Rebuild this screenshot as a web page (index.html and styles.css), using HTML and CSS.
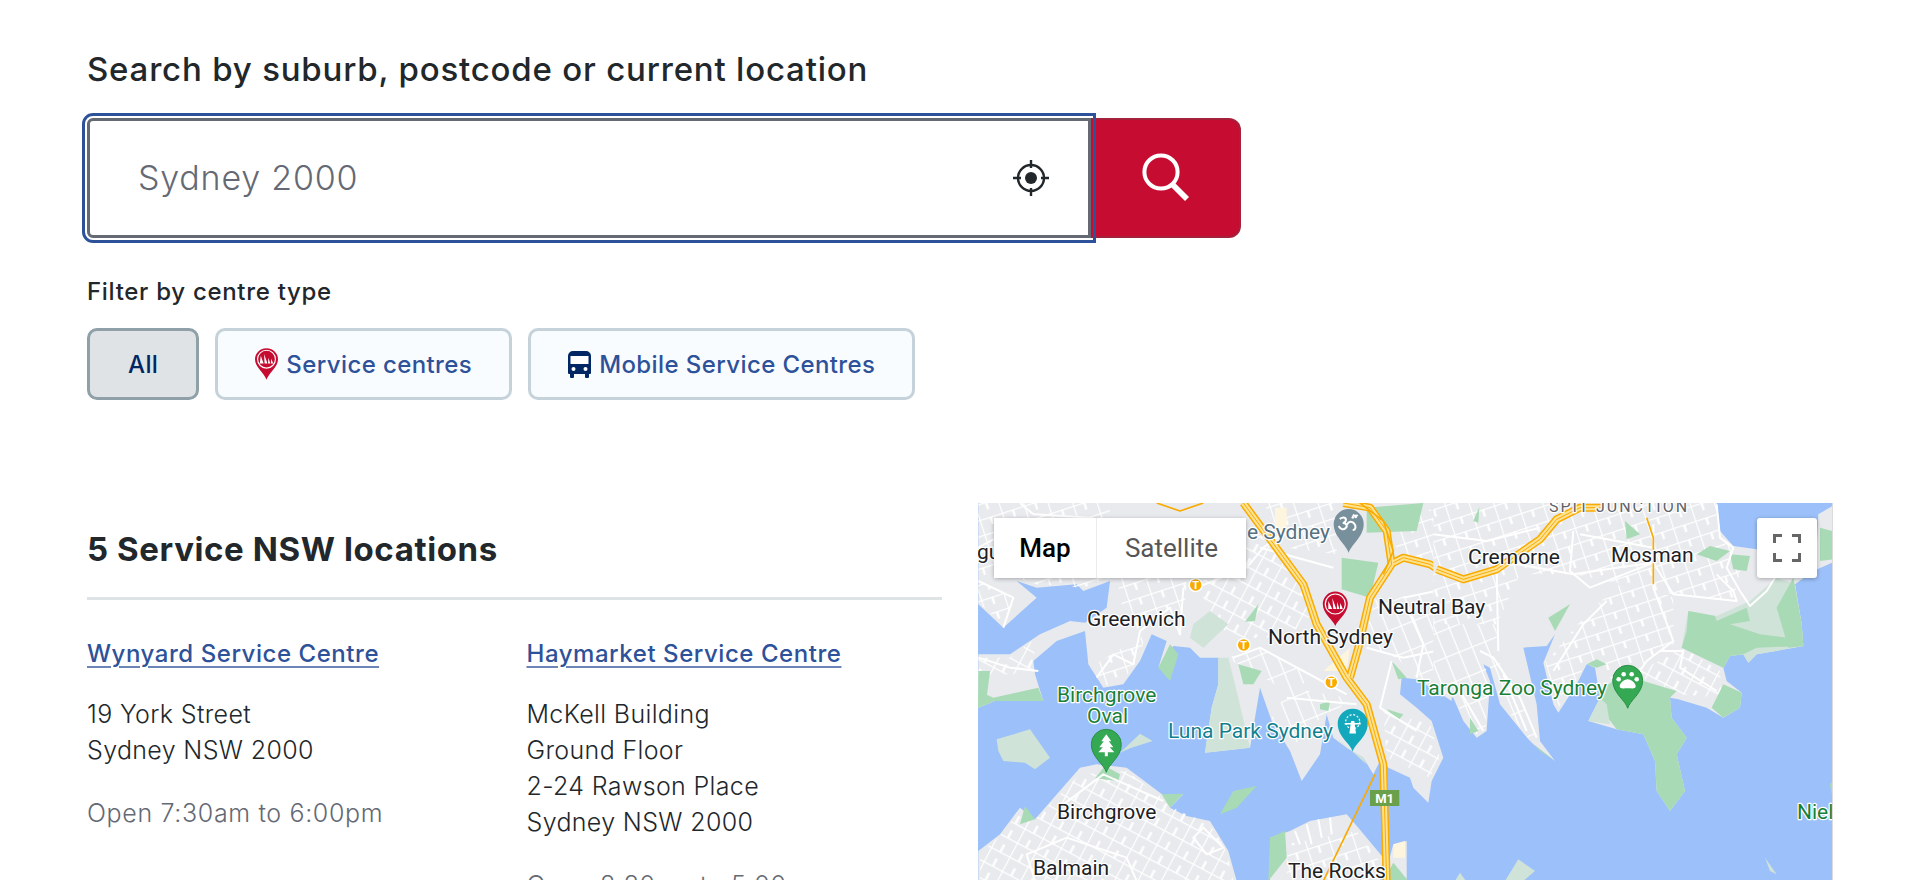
FILE: index.html
```html
<!DOCTYPE html>
<html lang="en">

<head>
    <meta charset="UTF-8">
    <meta name="viewport" content="width=device-width, initial-scale=1.0">
    <title>Find a Service NSW location</title>
    <link rel="stylesheet" href="styles.css">
</head>

<body>
    <h2 class="search-title">Search by suburb, postcode or current location</h2>

    <div class="search-row">
        <div class="search-input">
            <span class="search-placeholder">Sydney 2000</span>
            <svg class="locate-icon" viewBox="0 0 36 36" aria-hidden="true">
                <circle cx="18" cy="18" r="13" fill="none" stroke="#22272b" stroke-width="2.4"/>
                <circle cx="18" cy="18" r="6" fill="#22272b"/>
                <path d="M18 0v8M18 28v8M0 18h8M28 18h8" stroke="#22272b" stroke-width="2.4"/>
            </svg>
        </div>
        <button class="search-button" type="button" aria-label="Search">
            <svg viewBox="0 0 50 50" width="50" height="50" aria-hidden="true">
                <circle cx="21" cy="19" r="16.6" fill="none" stroke="#fff" stroke-width="4"/>
                <path d="M33 32l14 14" stroke="#fff" stroke-width="5.6"/>
            </svg>
        </button>
    </div>

    <p class="filter-label">Filter by centre type</p>
    <div class="filter-row">
        <button class="chip chip-active" type="button">All</button>
        <button class="chip" type="button">
            <svg class="chip-icon" viewBox="0 0 24 33" width="23" height="32" aria-hidden="true">
                <path d="M12 33C10 26 0 20 0 11.500A12 11.500 0 0 1 24 11.500C24 20 14 26 12 33Z" fill="#c60c30"/>
                <circle cx="12" cy="11.500" r="9.300" fill="none" stroke="#fff" stroke-width="1.200"/>
                <path d="M6 8l3 8H5ZM9.500 6l3.500 10h-3ZM14 10l2 6h-2.400ZM17 11l2 5h-2.500Z" fill="#fff"/>
            </svg>
            Service centres
        </button>
        <button class="chip" type="button">
            <svg class="chip-icon" viewBox="0 0 23 27" width="23" height="27" aria-hidden="true">
                <path d="M5 0h13a5 5 0 0 1 5 5v17a1 1 0 0 1-1 1h-1v3a1 1 0 0 1-1 1h-2a1 1 0 0 1-1-1v-3H6v3a1 1 0 0 1-1 1H3a1 1 0 0 1-1-1v-3H1a1 1 0 0 1-1-1V5a5 5 0 0 1 5-5Z" fill="#002664"/>
                <rect x="2.500" y="5" width="18" height="8" fill="#fff"/>
                <circle cx="5.500" cy="18" r="2" fill="#fff"/>
                <circle cx="17.500" cy="18" r="2" fill="#fff"/>
            </svg>
            Mobile Service Centres
        </button>
    </div>

    <div class="results">
        <section class="results-list">
            <h2 class="results-title">5 Service NSW locations</h2>
            <div class="location-grid">
                <article class="location">
                    <a class="location-name" href="#">Wynyard Service Centre</a>
                    <p class="location-address">19 York Street<br>Sydney NSW 2000</p>
                    <p class="location-hours">Open 7:30am to 6:00pm</p>
                </article>
                <article class="location">
                    <a class="location-name" href="#">Haymarket Service Centre</a>
                    <p class="location-address">McKell Building<br>Ground Floor<br>2-24 Rawson Place<br>Sydney NSW 2000</p>
                    <p class="location-hours">Open 8:30am to 5:00pm</p>
                </article>
            </div>
        </section>

        <section class="map">
            <svg class="map-canvas" viewBox="978 502 854 378" width="854" height="378" aria-label="Map of Sydney Harbour">
                <defs>
                    <pattern id="streets-a" patternUnits="userSpaceOnUse" width="70" height="46" patternTransform="rotate(-18)">
                        <path d="M0 0H70M0 0V46M35 0V23" fill="none" stroke="#fff" stroke-width="7"/>
                    </pattern>
                    <pattern id="streets-b" patternUnits="userSpaceOnUse" width="62" height="48" patternTransform="rotate(28)">
                        <path d="M0 0H62M0 0V48M31 24V48" fill="none" stroke="#fff" stroke-width="7"/>
                    </pattern>
                    <pattern id="streets-c" patternUnits="userSpaceOnUse" width="78" height="42" patternTransform="rotate(68)">
                        <path d="M0 0H78M0 0V42" fill="none" stroke="#fff" stroke-width="7"/>
                    </pattern>
                    <path id="hw-a" d="M820 36L1000 280 1040 400 1130 560 1190 640 1240 820 1250 1170"/>
                    <path id="hw-b" d="M1120 36L1200 50 1250 120 1265 220 1200 320 1165 470 1140 560"/>
                    <path id="hw-c" d="M1270 215L1300 200 1380 220 1445 260"/>
                    <path id="hw-d" d="M-10 235L70 265 170 235 300 145 350 85 420 50 490 50"/>
                </defs>

                <!-- west half, traced at 3x -->
                <g transform="translate(970 490) scale(.33333)">
                    <path class="land" d="M25 30L1445 30 1445 630 1400 600 1340 565 1295 560 1290 610 1340 650 1385 690 1420 800 1385 870 1375 935 1330 890 1320 860 1255 830 1235 800 1210 850 1180 800 1130 770 1090 740 1070 670 1060 730 1050 790 995 870 960 780 905 690 870 590 840 770 705 785 725 650 745 580 745 500 690 500 660 470 610 465 565 530 590 450 545 430 510 510 460 580 400 590 355 520 345 420 260 450 190 510 195 550 220 630 75 630 25 650 25 490 120 490 210 430 300 390 345 395 410 350 420 270 340 300 320 280 200 290 140 270 200 320 100 410 25 340Z"/>
                    <path class="land" d="M25 1170L25 1080 90 1030 150 950 195 985 330 830 380 820 470 830 590 920 640 910 600 950 650 975 720 990 775 1080 800 1170Z"/>
                    <path class="land" d="M900 1170L900 1040 960 1020 1020 990 1130 970 1165 1010 1240 1100 1230 1170Z"/>
                    <path class="land" d="M1240 1170L1270 1060 1310 1050 1310 1170Z"/>

                    <path fill="url(#streets-a)" d="M25 36L420 36 420 260 340 290 200 280 140 260 25 260ZM25 270L130 320 100 400 25 335ZM440 260L650 260 640 420 600 350 520 410 470 420ZM880 36L1100 36 1100 190 950 170ZM1270 50L1445 60 1445 250 1280 190ZM360 530L440 480 530 430 500 510 455 575 400 585ZM950 1060L1160 1020 1230 1110 1225 1170 950 1170Z"/>
                    <path fill="url(#streets-b)" d="M700 270L870 130 1000 290 1020 400 900 440 780 440 700 330ZM1240 660L1380 700 1410 800 1380 860 1250 800ZM195 985L330 850 470 840 590 930 610 950 720 1000 770 1080 790 1170 30 1170 30 1085 90 1035 150 960ZM25 500L120 500 200 440 190 510 195 550 25 550Z"/>
                    <path fill="url(#streets-c)" d="M1180 330L1445 300 1445 600 1340 560 1280 500 1190 470ZM960 590L1130 620 1110 650 1060 670 1010 730 960 770 905 680ZM770 500L870 470 1040 560 950 600 880 560Z"/>

                    <path class="pale" d="M80 745L180 715 240 800 195 835 165 815 100 810 85 780Z"/>
                    <path class="pale" d="M450 785L510 728 548 750 480 772Z"/>
                    <path class="park" d="M750 970L790 900 860 885 800 950Z"/>
                    <path class="pale" d="M705 785L725 650 745 580 745 500 775 500 800 600 840 770Z"/>
                    <path class="park" d="M1115 200L1225 215 1200 320 1115 295Z"/>
                    <path class="park" d="M1190 50L1360 36 1340 120 1190 125Z"/>
                    <path class="park" d="M825 392L865 340 855 390Z"/>
                    <path class="park" d="M805 520L875 540 850 580 820 580Z"/>
                    <path class="pale" d="M670 400L720 360 775 400 700 470 660 440Z"/>
                    <path class="park" d="M375 862L405 825 450 850 445 870Z"/>
                    <path class="park" d="M565 530L600 460 625 490 600 570Z"/>
                    <path class="park" d="M25 600L70 620 205 590 220 630 75 630 25 650Z"/>
                    <path class="park" d="M25 540L60 540 50 620 25 650Z"/>
                    <path class="park" d="M150 1000L165 945 195 985Z"/>
                    <path class="park" d="M1240 1170L1270 1115 1315 1170Z"/>
                    <path class="park" d="M895 1170L900 1040 945 1020 950 1100Z"/>
                    <path class="park" d="M575 910L640 908 600 950Z"/>
                    <path class="park" d="M1265 510L1310 560 1285 565Z"/>
                    <path class="pale" d="M1180 800L1130 770 1100 740 1190 820Z"/>
                    <path class="park" d="M1050 640L1080 630 1075 660 1050 655Z"/>
                    <path class="park" d="M1250 655L1300 670 1285 690Z"/>
                    <path class="sand" d="M915 50L950 50 950 130 915 120Z"/>
                    <path class="sand" d="M1060 540L1140 470 1130 540 1090 540Z"/>
                    <path class="sand" d="M1270 1060L1305 1050 1305 1100 1270 1100Z"/>
                    <path class="road" d="M25 270L130 320 100 410M25 170L80 140 170 130M150 36L190 70 370 80M25 500L120 530 205 540M640 290L630 430 600 350 510 420 490 520 430 490 380 560M680 290L830 230 880 170 960 110M790 500L870 470 1000 540 1130 610M950 620L1160 640M870 170L1090 230M1190 470L1300 500 1445 470M1265 510L1230 650 1340 720M1320 370L1360 460 1340 560M1300 320L1445 290M195 1170L170 1090 290 1040 470 1100 500 1170M280 940L400 850 580 930M700 1010L760 1070 710 1090 670 1040ZM975 1020L990 1060M1010 1000L1025 1060M1045 985L1055 1040M1080 980L1085 1030"/>

                    <g fill="none" stroke-linejoin="round">
                        <use href="#hw-a" class="hw-out"/>
                        <use href="#hw-b" class="hw-out"/>
                        <use href="#hw-c" class="hw-out"/>
                        <use href="#hw-a" class="hw-in"/>
                        <use href="#hw-b" class="hw-in"/>
                        <use href="#hw-c" class="hw-in"/>
                        <use href="#hw-a" class="hw-mid"/>
                        <use href="#hw-b" class="hw-mid"/>
                        <use href="#hw-c" class="hw-mid"/>
                    </g>
                    <path class="ramp" d="M1215 850L1060 1170M560 36L630 60 700 36M1170 36L1240 90 1270 180 1240 250"/>
                </g>

                <!-- east half -->
                <g transform="translate(1440 490) scale(.33333)">
                    <path class="land" d="M-20 30L830 30 840 120 880 165 950 175 1130 175 1135 70 1177 45 1177 215 1120 240 1065 280 1085 400 1090 465 950 490 925 515 910 490 870 495 850 530 860 570 905 605 900 650 850 680 800 650 715 625 690 620 695 680 740 740 710 790 735 900 690 960 650 900 645 810 610 730 530 715 445 690 480 620 465 530 440 520 410 580 355 665 340 640 310 515 345 430 320 465 250 470 290 640 300 750 345 810 280 760 265 745 180 640 150 530 130 520 150 570 140 720 110 740 70 690 40 620 -20 600Z"/>

                    <path fill="url(#streets-a)" d="M-20 36L830 36 840 130 880 170 900 240 880 330 700 310 400 250 240 250 170 400 -20 400ZM330 500L430 380 560 260 700 320 700 460 620 510 600 540 520 570 470 520 440 510 410 570 355 650 315 510Z"/>
                    <path fill="url(#streets-c)" d="M-20 400L170 400 170 500 240 620 290 740 265 740 180 630 150 530 130 510 150 570 135 720 110 730 70 680 40 615 -20 595Z"/>
                    <path fill="url(#streets-b)" d="M600 540L730 470 840 540 845 620 715 610 620 570Z"/>

                    <path class="pale" d="M930 330L1010 260 1065 280 1085 400 1090 465 950 490 925 515 910 490 870 495 850 530 725 470 745 360 830 375Z"/>
                    <path class="park" d="M725 470L740 420 745 360 825 375 830 390 920 350 930 390 870 400 960 430 1040 440 1090 465 950 470 910 490 870 495 850 530Z"/>
                    <path class="park" d="M1010 350L1060 260 1085 400 1090 465 1045 470Z"/>
                    <path class="park" d="M1140 210L1177 205 1177 120 1140 110Z"/>
                    <path class="park" d="M610 570L710 600 690 620 695 680 740 740 710 790 735 900 690 960 650 900 645 810 610 730 530 715 480 650 475 600 520 570Z"/>
                    <path class="pale" d="M445 690L480 620 500 640 510 700Z"/>
                    <path class="park" d="M770 190L810 165 870 180 830 210Z"/>
                    <path class="park" d="M870 190L930 195 920 240 880 235Z"/>
                    <path class="park" d="M555 90L600 130 560 145Z"/>
                    <path class="park" d="M325 380L390 340 345 420Z"/>
                    <path class="park" d="M100 90L118 48 115 95Z"/>
                    <path class="park" d="M280 760L345 810 300 780Z"/>
                    <path class="park" d="M90 680L115 720 90 730Z"/>
                    <path class="park" d="M850 580L905 605 900 650 850 680 815 650Z"/>
                    <path class="park" d="M440 520L470 505 500 520 470 530Z"/>
                    <path class="pale" d="M195 1170L235 1105 285 1140 250 1170Z"/>
                    <path class="pale" d="M975 1100L1010 1150 990 1140Z"/>
                    <path class="pale" d="M45 1170L60 1145 78 1170Z"/>
                    <path class="park" d="M1170 880L1177 870 1177 920Z"/>
                    <path class="road" d="M-20 130L140 150 300 110M180 210L400 250 530 230 640 215 700 310 890 330 880 300 830 250M400 120L390 240 450 290M450 290L640 215M640 100L640 290 700 450 620 510 600 540M420 130L640 170M830 40L840 140 880 170 860 230 900 300 930 345 980 300 1005 260M170 240L175 480M120 480L160 500 240 620 290 740M190 550L260 720M340 540L430 400 500 330M660 480L730 480 720 530 830 600M60 600L130 720"/>

                    <g fill="none" stroke-linejoin="round">
                        <use href="#hw-d" class="hw-out"/>
                        <use href="#hw-d" class="hw-in"/>
                        <use href="#hw-d" class="hw-mid"/>
                    </g>
                    <path class="ramp" d="M620 80L640 140 640 280"/>
                </g>

                <text class="label label-poi" x="1247" y="538">e Sydney</text>
                <text class="label" x="977" y="558">gu</text>
                <text class="label" x="1087" y="625">Greenwich</text>
                <text class="label" x="1268" y="643">North Sydney</text>
                <text class="label" x="1378" y="613">Neutral Bay</text>
                <text class="label" x="1468" y="563">Cremorne</text>
                <text class="label" x="1611" y="561">Mosman</text>
                <text class="label label-small" x="1549" y="511">SPIT JUNCTION</text>
                <text class="label label-park" x="1057" y="701">Birchgrove</text>
                <text class="label label-park" x="1087" y="722">Oval</text>
                <text class="label" x="1057" y="818">Birchgrove</text>
                <text class="label" x="1033" y="874">Balmain</text>
                <text class="label" x="1288" y="877">The Rocks</text>
                <text class="label label-fun" x="1168" y="737">Luna Park Sydney</text>
                <text class="label label-park" x="1417" y="694">Taronga Zoo Sydney</text>
                <text class="label label-park" x="1797" y="818">Niel</text>

                <g class="station" transform="translate(1195.700 584)"><circle r="6.500"/><text y="4">T</text></g>
                <g class="station" transform="translate(1243.700 644)"><circle r="6.500"/><text y="4">T</text></g>
                <g class="station" transform="translate(1331.300 681.300)"><circle r="6.500"/><text y="4">T</text></g>

                <rect x="1370" y="789" width="29.300" height="16" fill="#6a9f4c"/>
                <text class="shield" x="1384.600" y="802">M1</text>

                <!-- temple -->
                <g transform="translate(1348.700 523)">
                    <path fill="#78909c" d="M0 29C-2 21-15 13-15 0A15 15 0 1 1 15 0C15 13 2 21 0 29Z"/>
                    <path d="M-9-5C-5-8-2-6-3-3-4-1-6-1-6-1-2-1-1 2-3 4-6 7-9 4-10 2M-2 1C0-3 3-3 5-1 8 2 7 6 4 6M4-9C6-8 8-8 9-9M3-7L5-6" fill="none" stroke="#fff" stroke-width="2"/>
                    <circle cx="7" cy="-7" r="1.300" fill="#fff"/>
                </g>
                <!-- service centre pin -->
                <g transform="translate(1335.300 603)">
                    <path fill="#c60c30" d="M0 22C-2 16-12.500 10-12.500 0A12.500 12.500 0 1 1 12.500 0C12.500 10 2 16 0 22Z"/>
                    <circle r="10" fill="none" stroke="#fff" stroke-width="1.200"/>
                    <path d="M-7-3L-3 5H-7ZM-3-6L1 5H-2ZM2-2L4 5H1.500ZM5-1L7.500 5H4.500Z" fill="#fff"/>
                </g>
                <!-- park -->
                <g transform="translate(1106.300 743.300)">
                    <path fill="#34a853" stroke="#2b8f45" d="M0 28C-2 20-15 13-15 0A15 15 0 1 1 15 0C15 13 2 20 0 28Z"/>
                    <path d="M0-10L5-3H2.500L7 3H3.500L8 8H1.500V12H-1.500V8H-8L-3.500 3H-7L-2.500-3H-5Z" fill="#fff"/>
                </g>
                <!-- amusement park -->
                <g transform="translate(1352.700 722.700)">
                    <path fill="#14a8bd" d="M0 28C-2 20-15 13-15 0A15 15 0 1 1 15 0C15 13 2 20 0 28Z"/>
                    <circle cy="-2" r="7" fill="none" stroke="#fff" stroke-width="1.200" stroke-dasharray="2 1.700"/>
                    <path d="M-2.500 9L-1-2H1L2.500 9ZM-8 0H8" stroke="#fff" stroke-width="1.400" fill="#fff"/>
                </g>
                <!-- zoo -->
                <g transform="translate(1627.700 679.300)">
                    <path fill="#34a853" stroke="#2b8f45" d="M0 28C-2 20-15 13-15 0A15 15 0 1 1 15 0C15 13 2 20 0 28Z"/>
                    <path d="M0-1C4-1 8 3 8 6 8 9 4 8 0 8-4 8-8 9-8 6-8 3-4-1 0-1Z" fill="#fff"/>
                    <circle cx="-9" cy="-1" r="2.300" fill="#fff"/>
                    <circle cx="-4" cy="-6" r="2.300" fill="#fff"/>
                    <circle cx="4" cy="-6" r="2.300" fill="#fff"/>
                    <circle cx="9" cy="-1" r="2.300" fill="#fff"/>
                </g>
            </svg>

            <div class="map-type">
                <button class="map-type-btn map-type-on" type="button">Map</button>
                <button class="map-type-btn" type="button">Satellite</button>
            </div>
            <button class="map-fullscreen" type="button" aria-label="Toggle fullscreen view">
                <svg viewBox="0 0 28 28" width="28" height="28" aria-hidden="true">
                    <path d="M1.500 9V1.500H9M19 1.500H26.500V9M26.500 19V26.500H19M9 26.500H1.500V19" fill="none" stroke="#666" stroke-width="3"/>
                </svg>
            </button>
        </section>
    </div>
</body>

</html>
```

FILE: styles.css
```css
html,
body {
    height: 880px;
    overflow: hidden;
}

body {
    margin: 0;
    padding: 49px 0 0 87px;
    box-sizing: border-box;
    font-family: Inter, "Open Sans", Arial, sans-serif;
    color: #22272b;
    background: #fff;
}

.search-title {
    margin: 0 0 29px;
    font-size: 33px;
    line-height: 40px;
    font-weight: 500;
    letter-spacing: .8px;
}

.search-row {
    display: flex;
    width: 1154px;
    height: 120px;
}

.search-input {
    position: relative;
    z-index: 1;
    flex: 0 0 1004px;
    display: flex;
    align-items: center;
    justify-content: space-between;
    box-sizing: border-box;
    padding: 0 39px 0 48px;
    border: 3px solid #646974;
    border-radius: 6px 0 0 6px;
    outline: 3px solid #2e5299;
    outline-offset: 2.5px;
    background: #fff;
}

.search-placeholder {
    margin-top: -2px;
    font-size: 34px;
    font-weight: 300;
    letter-spacing: .8px;
    color: #646974;
}

.locate-icon {
    width: 36px;
    height: 36px;
}

.search-button {
    flex: 1;
    display: flex;
    align-items: center;
    justify-content: center;
    padding: 0;
    border: 2px solid #a5203a;
    border-left: none;
    border-radius: 0 12px 12px 0;
    background: #c60c30;
}

.filter-label {
    margin: 39px 0 21px;
    font-size: 24px;
    line-height: 30px;
    font-weight: 500;
    letter-spacing: .7px;
}

.filter-row {
    display: flex;
    gap: 16px;
}

.chip {
    display: flex;
    align-items: center;
    gap: 8px;
    height: 72px;
    padding: 0 37px;
    border: 3px solid #c5d2da;
    border-radius: 10px;
    background: #f9fcff;
    font-family: inherit;
    font-size: 24px;
    font-weight: 500;
    letter-spacing: .4px;
    color: #2e5299;
}

.chip-active {
    padding: 0 38px;
    border-color: #90a0a8;
    background: #dfe3e6;
    color: #002664;
}

.results {
    display: flex;
    gap: 36px;
    margin-top: 103px;
}

.results-list {
    flex: 0 0 855px;
    padding-top: 26px;
}

.results-title {
    margin: 0;
    padding-bottom: 28px;
    border-bottom: 3px solid #dee3e5;
    font-size: 33px;
    line-height: 40px;
    font-weight: 700;
    letter-spacing: .6px;
}

.location-grid {
    display: grid;
    grid-template-columns: 415.5px 415.5px;
    column-gap: 24px;
    margin-top: 36px;
}

.location-name {
    display: block;
    width: max-content;
    font-size: 24px;
    line-height: 36px;
    font-weight: 500;
    letter-spacing: .55px;
    color: #2e5299;
    text-decoration: underline;
    text-underline-offset: 4px;
    text-decoration-color: #6c84b6;
    text-decoration-thickness: 2px;
}

.location-address {
    margin: 24px 0 0;
    font-size: 25px;
    line-height: 36px;
    font-weight: 300;
    letter-spacing: .35px;
}

.location-hours {
    margin: 27px 0 0;
    font-size: 25px;
    line-height: 36px;
    font-weight: 300;
    letter-spacing: .65px;
    color: #646974;
}

/* map */
.map {
    position: relative;
    flex: 0 0 855px;
    height: 378px;
    box-sizing: border-box;
    border-right: 1px solid #dcdcdc;
    overflow: hidden;
}

.map-canvas {
    display: block;
    background: #9cc0f9;
}

.land {
    fill: #e8eaed;
}

.park {
    fill: #a8dab5;
}

.pale {
    fill: #cfe3d8;
}

.sand {
    fill: #fdf5dd;
}

.road {
    fill: none;
    stroke: #fff;
    stroke-width: 6;
    stroke-linejoin: round;
}

.hw-out {
    stroke: #f9ab00;
    stroke-width: 24;
}

.hw-in {
    stroke: #fde293;
    stroke-width: 15;
}

.hw-mid {
    stroke: #f9ab00;
    stroke-width: 3;
}

.ramp {
    fill: none;
    stroke: #f9ab00;
    stroke-width: 5;
    stroke-linejoin: round;
}

.label {
    font-family: Roboto, sans-serif;
    font-size: 21px;
    fill: #202124;
    stroke: #fff;
    stroke-width: 2.5px;
    stroke-linejoin: round;
    paint-order: stroke;
}

.label-park {
    fill: #188038;
}

.label-fun {
    fill: #12808f;
}

.label-poi {
    fill: #55707f;
}

.label-small {
    font-size: 16px;
    letter-spacing: 2px;
    fill: #5f6368;
}

.station circle {
    fill: #f9ab00;
    stroke: #fff;
    stroke-width: 1.5px;
}

.station text {
    font-family: Roboto, sans-serif;
    font-size: 11px;
    font-weight: 700;
    text-anchor: middle;
    fill: #fff;
}

.shield {
    font-family: Roboto, sans-serif;
    font-size: 13px;
    font-weight: 700;
    text-anchor: middle;
    fill: #fff;
}

.map-type {
    position: absolute;
    top: 15px;
    left: 16px;
    display: flex;
    border-radius: 3px;
    box-shadow: 0 1px 4px rgba(0, 0, 0, .3);
}

.map-type-btn {
    height: 60px;
    width: 149px;
    padding: 0;
    border: none;
    background: #fff;
    font-family: Roboto, sans-serif;
    font-size: 26px;
    color: #565656;
}

.map-type-on {
    width: 103px;
    border-right: 1px solid #ebebeb;
    font-weight: 500;
    color: #000;
}

.map-fullscreen {
    position: absolute;
    top: 15px;
    left: 779px;
    display: flex;
    align-items: center;
    justify-content: center;
    width: 60px;
    height: 60px;
    padding: 0;
    border: none;
    border-radius: 3px;
    background: #fff;
    box-shadow: 0 1px 4px rgba(0, 0, 0, .3);
}
```
